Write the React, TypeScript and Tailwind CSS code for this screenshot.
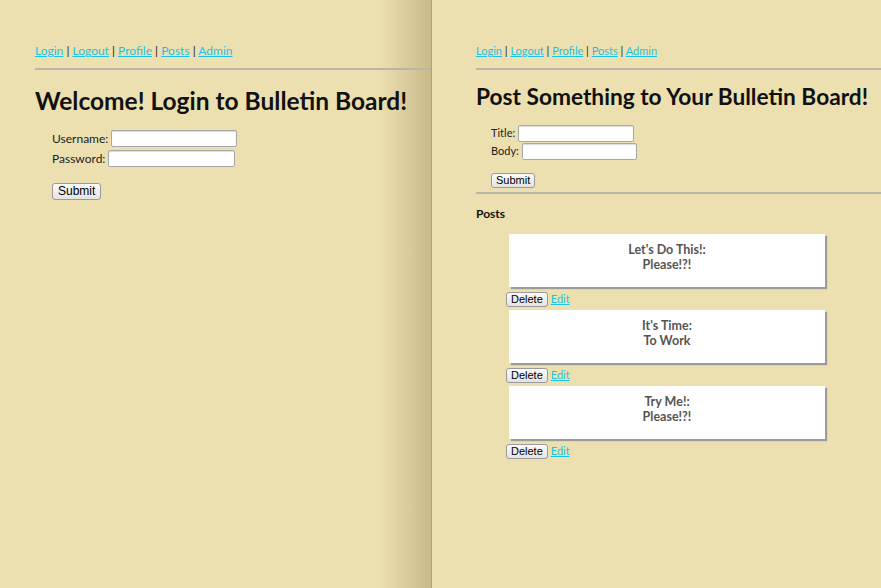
import React from 'react'

const font = "font-['Lato',_'Noto_Sans',_sans-serif]"

const Nav = ({ size }: { size: string }) => (
  <div className={`${size} text-[#222] leading-[16px]`}>
    <a href="#" className="text-[#1ec0e4] underline">Login</a> |{' '}
    <a href="#" className="text-[#1ec0e4] underline">Logout</a> |{' '}
    <a href="#" className="text-[#1ec0e4] underline">Profile</a> |{' '}
    <a href="#" className="text-[#1ec0e4] underline">Posts</a> |{' '}
    <a href="#" className="text-[#1ec0e4] underline">Admin</a>
  </div>
)

const Btn = ({ children, small }: { children: React.ReactNode; small?: boolean }) => (
  <button
    className={`${small ? 'h-[15px] px-[4px] text-[11px]' : 'h-[17px] px-[5px] text-[12px]'} bg-gradient-to-b from-[#fbfbfb] to-[#e4e4e4] border border-[#9a9a9a] rounded-[3px] leading-[13px] text-black font-['Liberation_Sans',_Arial,_sans-serif]`}
  >
    {children}
  </button>
)

const Field = ({ label, w, size, h }: { label: string; w: string; size: string; h: string }) => (
  <div className={`flex items-center gap-[3px] ${h}`}>
    <span className={`${size} text-[#222]`}>{label}</span>
    <input className={`${w} h-[17px] bg-white border border-[#a8a8a8] rounded-[2px] shadow-[inset_0_1px_1px_rgba(0,0,0,0.15)]`} />
  </div>
)

const posts = [
  { title: "Let's Do This!:", body: 'Please!?!' },
  { title: "It's Time:", body: 'To Work' },
  { title: 'Try Me!:', body: 'Please!?!' },
]

export default function App() {
  return (
    <div className={`flex w-[881px] h-[588px] overflow-hidden bg-[#ede0b0] ${font}`}>
      {/* left page */}
      <div className="w-[432px] shrink-0 pl-[35px] pt-[43px] bg-linear-to-r from-[#ede0b0] from-[88%] to-[#c9ba8a] border-r border-[#b0a37a]">
        <Nav size="text-[12px]" />
        <div className="mt-[9px] h-[2px] bg-[#b9b6a8]" />
        <h1 className="mt-[16px] text-[24.5px] font-bold leading-[30px] text-[#111] whitespace-nowrap">
          Welcome! Login to Bulletin Board!
        </h1>
        <div className="pl-[17px] mt-[13px] flex flex-col gap-[1px]">
          <Field label="Username:" w="w-[126px]" size="text-[12px]" h="h-[19px]" />
          <Field label="Password:" w="w-[127px]" size="text-[12px]" h="h-[19px]" />
          <div className="mt-[8px]">
            <Btn>Submit</Btn>
          </div>
        </div>
      </div>

      {/* right page */}
      <div className="flex-1 pl-[44px] pt-[43px]">
        <Nav size="text-[11px]" />
        <div className="mt-[9px] h-[2px] bg-[#b9b6a8]" />
        <h1 className="mt-[13px] text-[22.7px] font-bold leading-[28px] text-[#111] whitespace-nowrap">
          Post Something to Your Bulletin Board!
        </h1>
        <div className="pl-[15px] mt-[13px] flex flex-col gap-[0px]">
          <Field label="Title:" w="w-[116px]" size="text-[11px]" h="h-[18px]" />
          <Field label="Body:" w="w-[115px]" size="text-[11px]" h="h-[18px]" />
          <div className="mt-[6px]">
            <Btn small>Submit</Btn>
          </div>
        </div>
        <div className="mt-[2px] h-[2px] bg-[#b9b6a8]" />
        <h2 className="mt-[12px] text-[12px] font-bold leading-[16px] text-[#111]">Posts</h2>
        <div className="mt-[12px] pl-[30px] flex flex-col">
          {posts.map((p, i) => (
            <div key={i} className="flex flex-col">
              <div className="ml-[3px] w-[316px] h-[53px] bg-white shadow-[2px_2px_1px_#9b9b9b] pt-[8px] text-center text-[12.5px] font-bold leading-[15px] text-[#555]">
                <div>{p.title}</div>
                <div>{p.body}</div>
              </div>
              <div className="mt-[5px] mb-[3px] flex items-center gap-[3px] h-[15px]">
                <Btn small>Delete</Btn>
                <a href="#" className="text-[11px] text-[#1ec0e4] underline">Edit</a>
              </div>
            </div>
          ))}
        </div>
      </div>
    </div>
  )
}
